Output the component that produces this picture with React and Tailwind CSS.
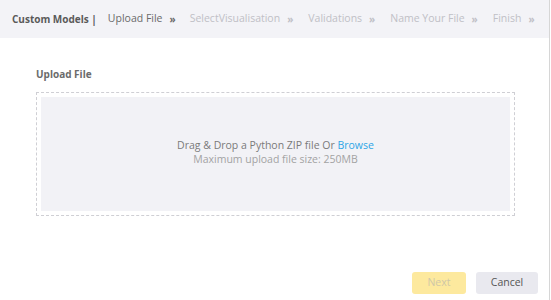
import React from "react";

const steps = ["SelectVisualisation", "Validations", "Name Your File", "Finish"];

const App = () => {
  return (
    <div
      className="w-[550px] h-[300px] bg-white border-r border-[#d6d6d6] flex flex-col"
      style={{ fontFamily: '"Open Sans", "Liberation Sans", sans-serif' }}
    >
      <div className="h-[38px] bg-[#f3f3f7] flex items-center pl-[12px] text-[10px] whitespace-nowrap">
        <span className="font-bold text-[#5a5a5a]">Custom Models |</span>
        <span className="ml-[11px] text-[#6a6a6a] text-[10.5px]">Upload File</span>
        <span className="ml-[7px] mr-[14px] text-[#6a6a6a] font-bold">»</span>
        {steps.map((s) => (
          <React.Fragment key={s}>
            <span className="text-[#c0c0c6] text-[10.5px]">{s}</span>
            <span className="ml-[7px] mr-[15px] text-[#c0c0c6] font-bold">»</span>
          </React.Fragment>
        ))}
      </div>

      <div className="px-[36px] pt-[29px]">
        <div className="text-[10px] font-bold text-[#6b6b6b] leading-[14px]">Upload File</div>
        <div className="mt-[11px] w-[479px] h-[124px] border border-dashed border-[#cfcfd4] p-[4px]">
          <div className="h-full bg-[#f2f2f6] flex flex-col items-center justify-center pb-[4px] text-[10.5px] leading-[14px]">
            <div className="text-[#7a7a7a]">
              Drag &amp; Drop a Python ZIP file Or <span className="text-[#2ea6e6]">Browse</span>
            </div>
            <div className="text-[#a3a3a3]">Maximum upload file size: 250MB</div>
          </div>
        </div>
      </div>

      <div className="mt-auto mb-[6px] flex justify-end gap-[10px] pr-[11px]">
        <button className="w-[54px] h-[22px] rounded-[3px] bg-[#fde99e] text-[10.5px] text-[#cfc7a8]">
          Next
        </button>
        <button className="w-[62px] h-[22px] rounded-[3px] bg-[#e9e9ef] text-[10.5px] text-[#555]">
          Cancel
        </button>
      </div>
    </div>
  );
};

export default App;
